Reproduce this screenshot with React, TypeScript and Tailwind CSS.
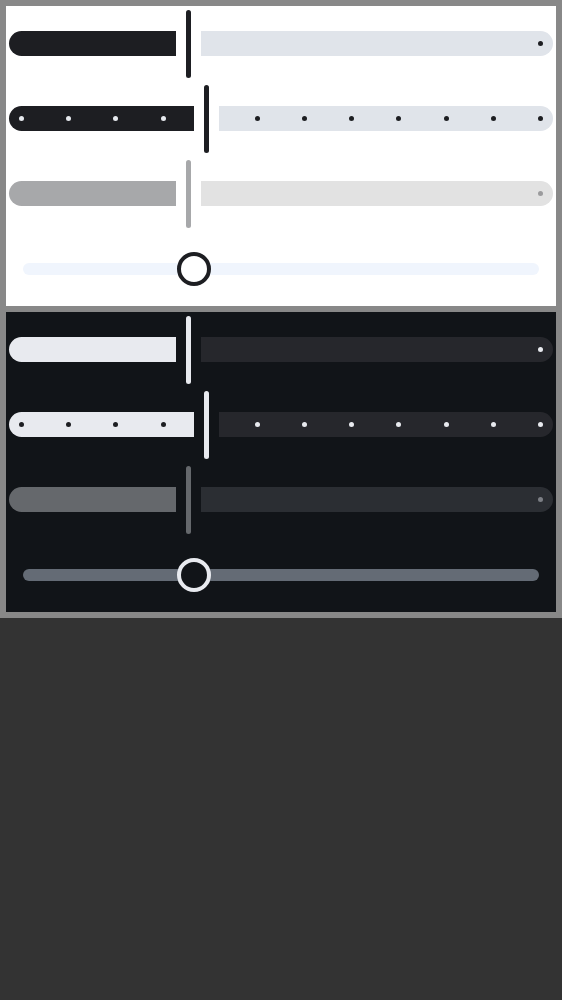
type Theme = {
  panel: string;
  active: string;
  inactive: string;
  dotOnActive: string;
  dotOnInactive: string;
  offActive: string;
  offInactive: string;
  offDot: string;
  rail: string;
  knob: string;
};

const light: Theme = {
  panel: "bg-white",
  active: "bg-[#1d1e22]",
  inactive: "bg-[#e0e4ea]",
  dotOnActive: "bg-[#e6e9ee]",
  dotOnInactive: "bg-[#1d1e22]",
  offActive: "bg-[#a7a8aa]",
  offInactive: "bg-[#e2e2e2]",
  offDot: "bg-[#9b9b9d]",
  rail: "bg-[#f0f5fd]",
  knob: "border-[#1d1e22] bg-white",
};

const dark: Theme = {
  panel: "bg-[#111418]",
  active: "bg-[#e8eaef]",
  inactive: "bg-[#26272c]",
  dotOnActive: "bg-[#1d1e22]",
  dotOnInactive: "bg-[#e8eaef]",
  offActive: "bg-[#65686c]",
  offInactive: "bg-[#2b2e33]",
  offDot: "bg-[#7c7f85]",
  rail: "bg-[#646b75]",
  knob: "border-[#e8eaef] bg-[#111418]",
};

function BarSlider({
  t,
  left,
  disabled,
}: {
  t: Theme;
  left: string;
  disabled?: boolean;
}) {
  const a = disabled ? t.offActive : t.active;
  const b = disabled ? t.offInactive : t.inactive;
  const d = disabled ? t.offDot : t.dotOnInactive;
  return (
    <div className="flex w-full items-center gap-[10px]">
      <div className={`h-[25px] ${left} rounded-l-full rounded-r-[2px] ${a}`} />
      <div className={`h-[68px] w-[5px] rounded-full ${a}`} />
      <div
        className={`flex h-[25px] flex-1 items-center justify-end rounded-l-[2px] rounded-r-full pr-[10px] ${b}`}
      >
        <div className={`h-[5px] w-[5px] rounded-full ${d}`} />
      </div>
    </div>
  );
}

function StepSlider({ t }: { t: Theme }) {
  const ticks = Array.from({ length: 12 }, (_, i) => i);
  return (
    <div className="relative flex w-full items-center gap-[10px]">
      <div className={`h-[25px] w-[185px] rounded-l-full rounded-r-[2px] ${t.active}`} />
      <div className={`h-[68px] w-[5px] rounded-full ${t.active}`} />
      <div className={`h-[25px] flex-1 rounded-l-[2px] rounded-r-full ${t.inactive}`} />
      <div className="pointer-events-none absolute inset-0 flex items-center justify-between px-[10px]">
        {ticks.map((i) => (
          <div
            key={i}
            className={`h-[5px] w-[5px] rounded-full ${
              i < 4 ? t.dotOnActive : i === 4 ? "bg-transparent" : t.dotOnInactive
            }`}
          />
        ))}
      </div>
    </div>
  );
}

function ClassicSlider({ t }: { t: Theme }) {
  return (
    <div className="relative w-full">
      <div className={`h-3 w-full rounded-full ${t.rail}`} />
      <div
        className={`absolute left-[154px] top-1/2 h-[34px] w-[34px] -translate-y-1/2 rounded-full border-4 ${t.knob}`}
      />
    </div>
  );
}

function Panel({ t }: { t: Theme }) {
  return (
    <div className={`flex h-[300px] flex-col ${t.panel}`}>
      <div className="flex h-[75px] items-center px-[3px]">
        <BarSlider t={t} left="w-[167px]" />
      </div>
      <div className="flex h-[75px] items-center px-[3px]">
        <StepSlider t={t} />
      </div>
      <div className="flex h-[75px] items-center px-[3px]">
        <BarSlider t={t} left="w-[167px]" disabled />
      </div>
      <div className="flex h-[75px] items-center px-[17px]">
        <ClassicSlider t={t} />
      </div>
    </div>
  );
}

export default function App() {
  return (
    <div className="min-h-screen bg-[#333333]">
      <div className="flex flex-col gap-[6px] bg-[#888888] p-[6px]">
        <Panel t={light} />
        <Panel t={dark} />
      </div>
    </div>
  );
}
